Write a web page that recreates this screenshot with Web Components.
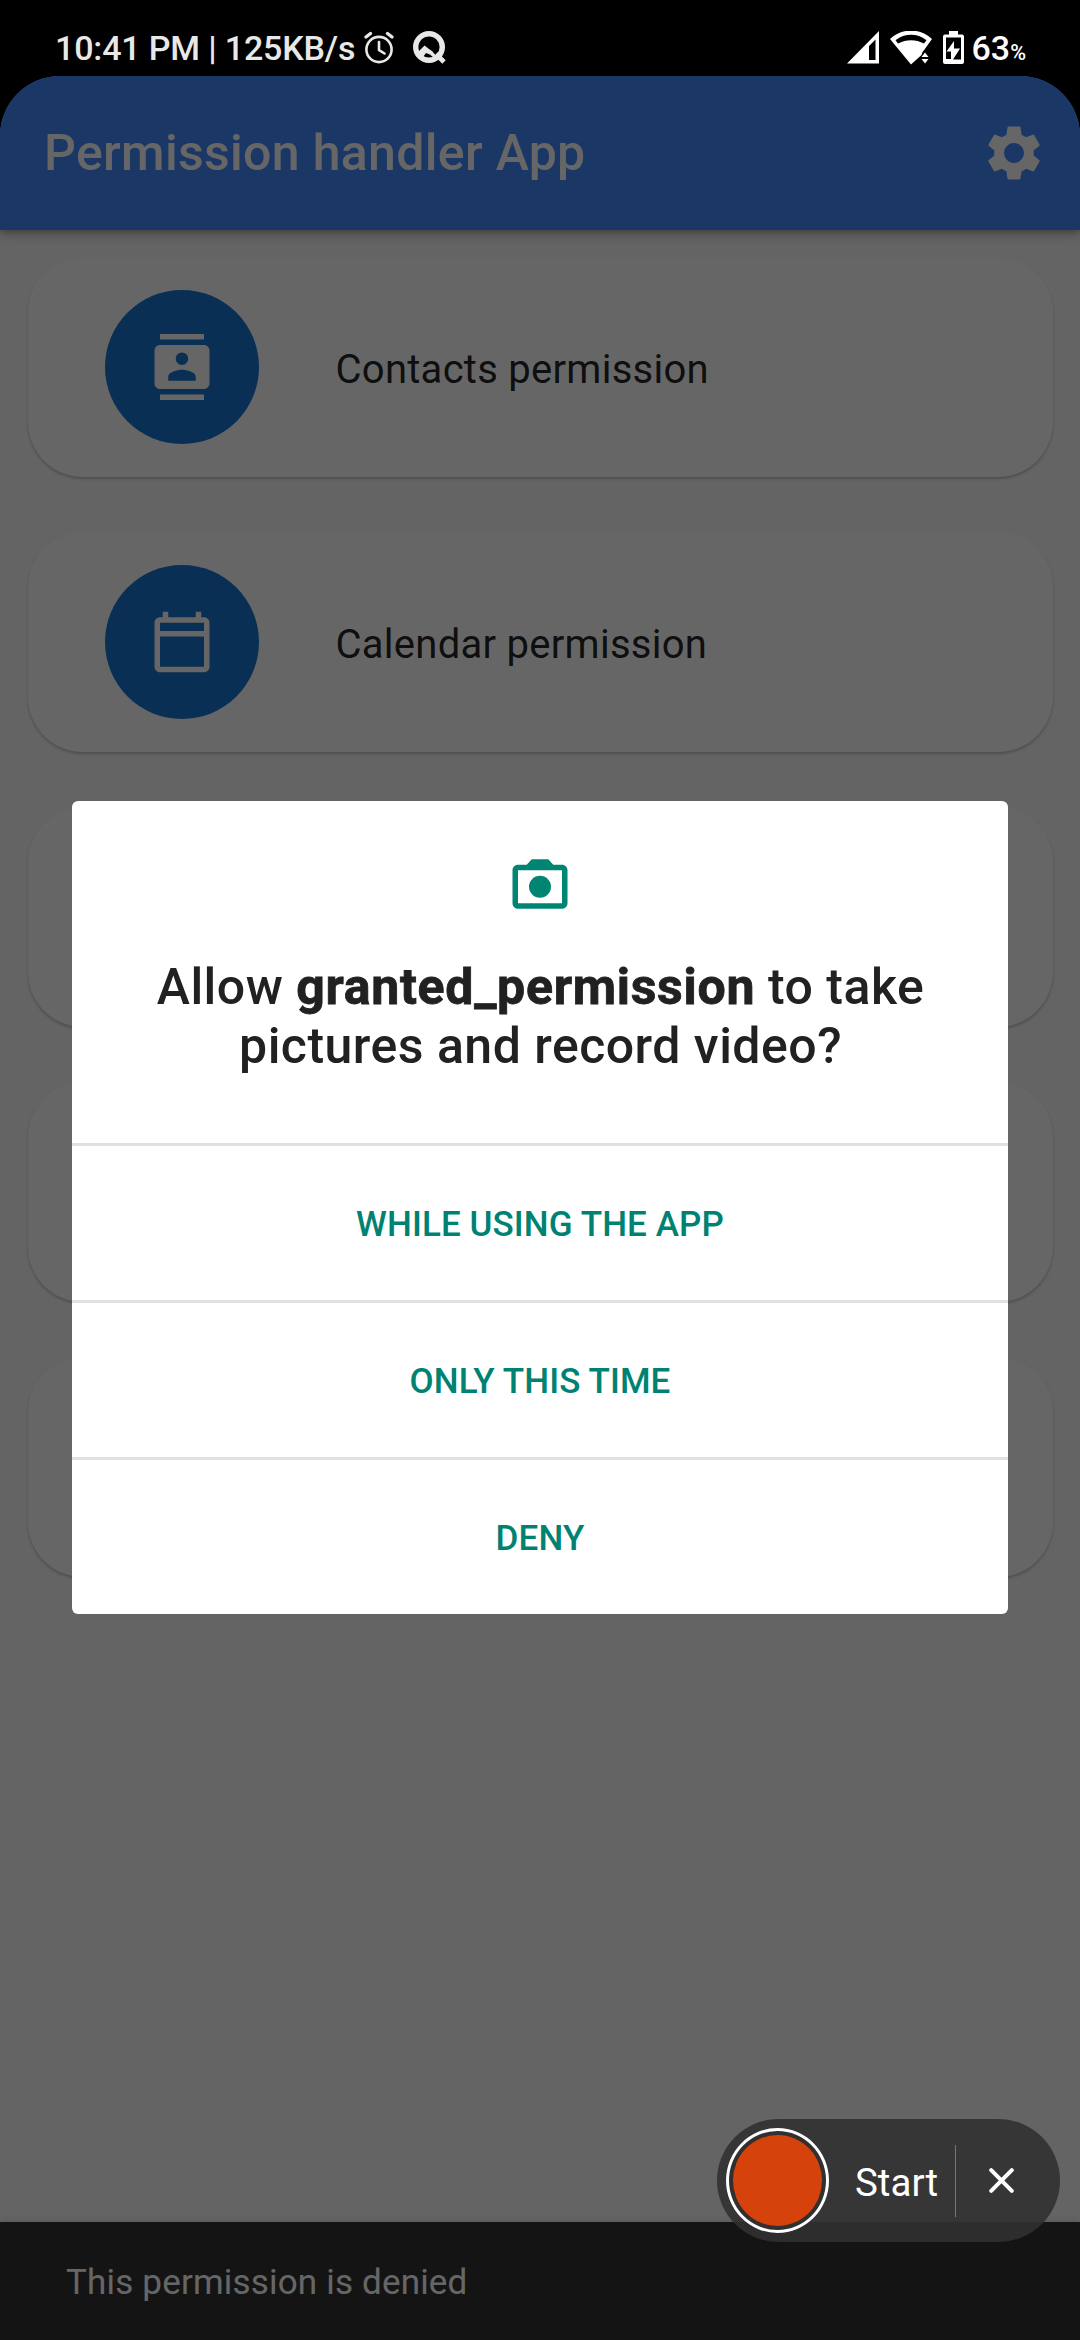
<!DOCTYPE html>
<html lang="en">
<head>
<meta charset="utf-8">
<title>Permission handler App</title>
<style>
html,body{margin:0;padding:0;background:#000}
body{width:1080px;height:2340px;overflow:hidden;font-family:Roboto,"Liberation Sans",sans-serif}
</style>
</head>
<body>
<phone-screen></phone-screen>
<script>
const define=(name,html)=>customElements.define(name,class extends HTMLElement{
  constructor(){super();this.attachShadow({mode:'open'}).innerHTML=html;}
});

define('status-bar',`
<style>
:host{display:flex;height:76px;box-sizing:border-box;padding:17px 54px 0 55px;align-items:flex-start;justify-content:space-between;color:#e8e8e8;font-size:34px;font-weight:500;line-height:62px}
.g{display:flex;height:62px;align-items:center;white-space:pre}
svg{display:block;flex:none}
.clock{letter-spacing:-.16px}
.alarm{margin-left:8px}.q{margin-left:17px}
.r{color:#fff}
.wifi{margin-left:11px}.bat{margin:0 7.500px 0 11.500px}
.pc{font-size:21.500px;line-height:62px;padding-top:5px;box-sizing:border-box;height:62px}
</style>
<div class="g"><span class="clock">10:41 PM | 125KB/s</span>
<svg class="alarm" width="32" height="34" viewBox="0 0 32 34" fill="none" stroke="#e8e8e8" stroke-width="2.6" stroke-linecap="round"><circle cx="16" cy="18.500" r="12.6"/><path d="M16 11V19L21.5 22.500"/><path stroke-width="3.4" d="M3 6L7.5 2.500M29 6L24.500 2.500"/></svg>
<svg class="q" width="34" height="34" viewBox="0 0 34 34"><circle cx="17" cy="16" r="13.300" fill="none" stroke="#e8e8e8" stroke-width="5.400"/><path d="M24 23L32 31" stroke="#e8e8e8" stroke-width="4.800"/><path d="M6 21L12.500 14.500L17 18L20 20L25 26L22 27L18 23.500L14 22L11 26Z" fill="#e8e8e8"/></svg></div>
<div class="g r">
<svg width="32" height="34" viewBox="0 0 32 34"><path fill="#fff" fill-rule="evenodd" d="M32 0V32.500H0ZM28.500 8.500V29H22V15Z"/></svg>
<svg class="wifi" width="42" height="34" viewBox="0 0 42 34"><path fill="#fff" fill-rule="evenodd" d="M0 8C12-3.300 30-3.300 42 8L34.500 18.500Q31.500 21.500 31.500 24L21 33.500ZM5.500 9.200L8 12.500C16 8 26 8 34 12.500L36.500 9.200C27 2 15 2 5.500 9.200Z"/><path fill="#fff" d="M31.500 26L35 21.500L38.500 26ZM31.500 28H38.500L35 32.500Z"/></svg>
<svg class="bat" width="21" height="34" viewBox="0 0 21 34"><path fill="#fff" fill-rule="evenodd" d="M6 0H15V3.500H19Q21 3.500 21 5.500V31Q21 33 19 33H2Q0 33 0 31V5.500Q0 3.500 2 3.500H6ZM3 6.500V28H8V20.500H3.500L11 10V17.500H17L10 28.500H18V6.500Z"/></svg>
<span class="pct">63</span><span class="pc">%</span></div>`);

define('app-bar',`
<style>
:host{display:flex;flex:none;height:154px;box-sizing:border-box;padding:0 33px 0 44px;align-items:center;justify-content:space-between;background:#448aff;color:#fff;font-size:50px;font-weight:500;letter-spacing:.32px;position:relative;box-shadow:0 5px 11px rgba(0,0,0,.22),0 2px 5px rgba(0,0,0,.18)}
</style>
<slot></slot>
<svg width="66" height="66" viewBox="0 0 24 24" fill="#fff"><path d="M19.140 12.940c.04-.3.06-.61.06-.94 0-.32-.02-.64-.07-.94l2.030-1.580c.18-.14.23-.41.12-.61l-1.920-3.320c-.12-.22-.37-.29-.59-.22l-2.390.96c-.5-.38-1.030-.7-1.620-.94l-.36-2.540c-.04-.24-.24-.41-.48-.41h-3.840c-.24 0-.43.17-.47.41l-.36 2.540c-.59.24-1.130.57-1.620.94l-2.390-.96c-.22-.08-.47 0-.59.22L2.740 8.870c-.12.21-.08.47.12.61l2.030 1.580c-.05.3-.09.63-.09.94s.02.64.07.94l-2.030 1.580c-.18.14-.23.41-.12.61l1.920 3.320c.12.22.37.29.59.22l2.390-.96c.5.38 1.030.7 1.620.94l.36 2.540c.05.24.24.41.48.41h3.840c.24 0 .44-.17.47-.41l.36-2.540c.59-.24 1.130-.56 1.620-.94l2.390.96c.22.08.47 0 .59-.22l1.920-3.320c.12-.22.07-.47-.12-.61l-2.010-1.580zM12 15.600c-1.980 0-3.600-1.620-3.600-3.600s1.620-3.600 3.600-3.600 3.600 1.620 3.600 3.600-1.620 3.600-3.600 3.600z"/></svg>`);

const cardShadow='box-shadow:0 2px 3px rgba(0,0,0,.22)';

define('permission-card',`
<style>
:host{display:flex;height:220px;box-sizing:border-box;padding-left:77px;align-items:center;gap:77px;background:#fff;border-radius:55px;${cardShadow};color:rgba(0,0,0,.87);font-size:40px;letter-spacing:.27px}
.disc{width:154px;height:154px;border-radius:50%;background:#1976d2;display:flex;align-items:center;justify-content:center}
.label{padding-top:4px}
</style>
<div class="disc"><slot name="icon"></slot></div><div class="label"><slot></slot></div>`);

define('blank-card',`
<style>
:host{display:block;height:220px;background:#fff;border-radius:55px;${cardShadow}}
</style>`);

define('snack-bar',`
<style>
:host{display:flex;height:118px;box-sizing:border-box;padding:2px 66px 0;align-items:center;background:#323232;color:#fff;font-size:35px;letter-spacing:.18px;flex:none;box-shadow:0 -1px 6px rgba(0,0,0,.12)}
</style><slot></slot>`);

define('dialog-button',`
<style>
:host{display:flex;height:154px;box-sizing:content-box;border-top:3px solid #e0e0e0;align-items:center;justify-content:center;color:#008273;font-size:35px;font-weight:500;line-height:41px;letter-spacing:.1px}
span{padding-top:2px}
</style><span><slot></slot></span>`);

define('permission-dialog',`
<style>
:host{display:flex;position:absolute;inset:75px 0 0 0;align-items:center;justify-content:center}
.panel{width:936px;background:#fff;border-radius:6px;overflow:hidden}
.head{height:342px;box-sizing:border-box;padding-top:50px;display:flex;flex-direction:column;align-items:center;gap:41px;color:#212121;font-size:50px;font-weight:500;line-height:59px;letter-spacing:.48px;text-align:center}
.t{width:820px;padding-left:1px}
</style>
<div class="panel">
<div class="head">
<svg width="66" height="66" viewBox="0 0 24 24" fill="#008573" style="flex:none"><path fill-rule="evenodd" d="M9 3L7.170 5H4c-1.100 0-2 .9-2 2v12c0 1.100.9 2 2 2h16c1.100 0 2-.9 2-2V7c0-1.100-.9-2-2-2h-3.170L15 3ZM4 7H20V19H4Z"/><circle cx="12" cy="13" r="4"/></svg>
<div class="t"><slot></slot></div>
</div>
<slot name="actions"></slot>
</div>`);

define('record-widget',`
<style>
:host{display:flex;position:absolute;left:717px;top:2119px;width:343px;height:123px;box-sizing:border-box;padding:0 46px 0 9px;align-items:center;justify-content:space-between;background:rgba(48,48,48,.89);border-radius:62px;color:#fff;font-size:38.500px}
.ring{width:103px;height:105px;box-sizing:border-box;border:3px solid #fff;border-radius:50%;display:flex;align-items:center;justify-content:center;background:#303030}
.dot{width:89px;height:91px;border-radius:50%;background:#d5420b}
.label{margin-left:26px;padding-top:3px}
.rule{width:1px;height:72px;background:#777;margin:0 33px 0 auto}
svg{display:block}
</style>
<div class="ring"><div class="dot"></div></div><div class="label"><slot></slot></div><div class="rule"></div>
<svg width="25" height="25" viewBox="0 0 25 25" stroke="#fff" stroke-width="4" stroke-linecap="round"><path d="M2.200 2.200L22.800 22.800M22.800 2.200L2.200 22.800"/></svg>`);

define('phone-screen',`
<style>
:host{display:flex;flex-direction:column;width:1080px;height:2340px;position:relative;background:#000;overflow:hidden}
.app{flex:1;min-height:0;display:flex;flex-direction:column;border-radius:60px 60px 0 0;overflow:hidden;position:relative}
.list{flex:1;display:flex;flex-direction:column;gap:55px;padding:27px 27.500px;background:#fafafa}
.scrim{position:absolute;inset:0;background:rgba(0,0,0,.6)}
b{font-weight:700;letter-spacing:.72px;-webkit-text-stroke:.8px #212121}
</style>
<status-bar></status-bar>
<div class="app">
<app-bar><span>Permission handler App</span></app-bar>
<div class="list">
<permission-card><svg slot="icon" width="66" height="66" viewBox="0 0 24 24" fill="#fff"><path d="M20 0H4v2h16V0zM4 24h16v-2H4v2zM20 4H4c-1.100 0-2 .9-2 2v12c0 1.100.9 2 2 2h16c1.100 0 2-.9 2-2V6c0-1.100-.9-2-2-2zm-8 2.750c1.240 0 2.250 1.010 2.250 2.250s-1.010 2.250-2.250 2.250S9.750 10.240 9.750 9 10.760 6.750 12 6.750zM17 17H7v-1.500c0-1.670 3.330-2.500 5-2.500s5 .83 5 2.500V17z"/></svg><span>Contacts permission</span></permission-card>
<permission-card><svg slot="icon" width="66" height="66" viewBox="0 0 24 24" fill="#fff"><path fill-rule="evenodd" d="M20 3h-1V1h-2v2H7V1H5v2H4c-1.100 0-2 .9-2 2v16c0 1.100.9 2 2 2h16c1.100 0 2-.9 2-2V5c0-1.100-.9-2-2-2zM4 5H20V8H4ZM4 10H20V21H4Z"/></svg><span>Calendar permission</span></permission-card>
<blank-card></blank-card><blank-card></blank-card><blank-card></blank-card>
</div>
<snack-bar><span>This permission is denied</span></snack-bar>
<div class="scrim"></div>
</div>
<permission-dialog><span>Allow <b>granted_permission</b> to take</span><br><span>pictures and record video?</span>
<dialog-button slot="actions">WHILE USING THE APP</dialog-button>
<dialog-button slot="actions">ONLY THIS TIME</dialog-button>
<dialog-button slot="actions">DENY</dialog-button></permission-dialog>
<record-widget><span>Start</span></record-widget>`);
</script>
</body>
</html>
